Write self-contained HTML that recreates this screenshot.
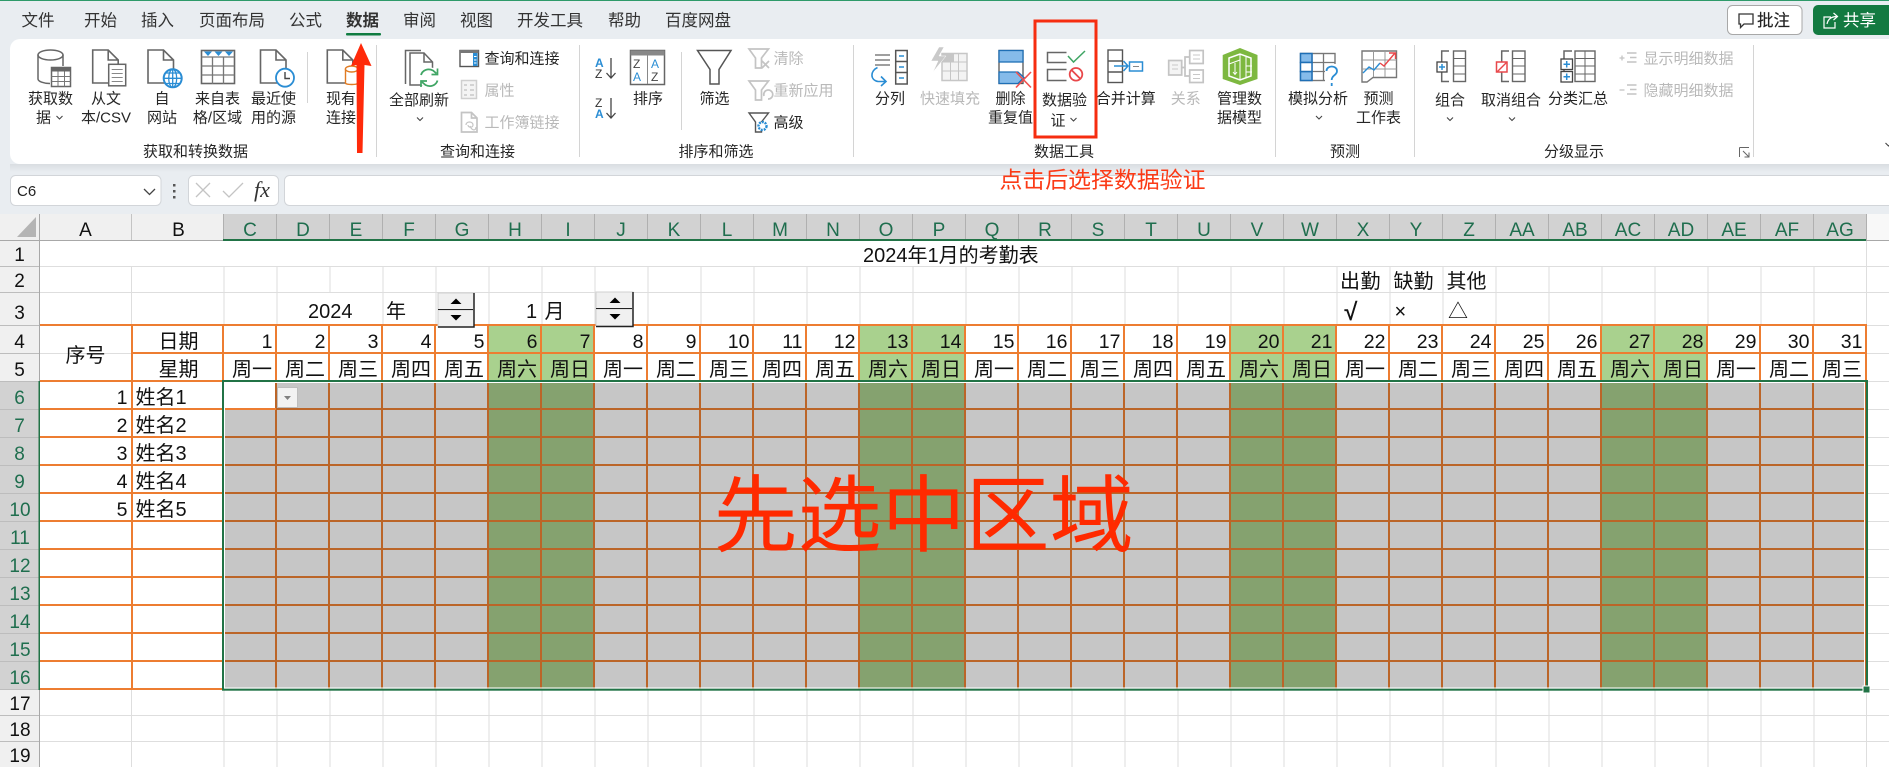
<!DOCTYPE html>
<html lang="zh-CN"><head><meta charset="utf-8"><title>2024年1月的考勤表</title>
<style>
html,body{margin:0;padding:0;width:1889px;height:767px;overflow:hidden;background:#fff}
svg{display:block}
text{font-family:"Liberation Sans","Noto Sans CJK SC",sans-serif;fill:#262626;font-size:15px}
.c{text-anchor:middle}
.g{fill:#b9b9b9}
.tab{font-size:16.5px;fill:#333}
.h{font-size:19px;text-anchor:middle;fill:#111}
.hs{font-size:19px;text-anchor:middle;fill:#1f6e4e}
.rn{font-size:19px;text-anchor:middle;fill:#111}
.rs{font-size:19px;text-anchor:middle;fill:#1f6e4e}
.s{font-size:20px;fill:#111}
.d{font-size:19.5px;text-anchor:end;fill:#111}
.w{font-size:20px;text-anchor:middle;fill:#111}
.i{fill:none;stroke:#666;stroke-width:1.5}
.l{fill:none;stroke:#c4c4c4;stroke-width:1.7}
</style></head><body>
<svg width="1889" height="767" viewBox="0 0 1889 767" xmlns="http://www.w3.org/2000/svg">
<defs>
<linearGradient id="sh" x1="0" y1="0" x2="0" y2="1"><stop offset="0" stop-color="#d9dde1"/><stop offset="1" stop-color="#e9edf1"/></linearGradient>
<path id="doc" d="M0 0H15.5L25.5 10V33H0ZM15.5 0V10H25.5" fill="#fff" stroke="#666" stroke-width="1.6"/>
</defs>
<!-- chrome -->
<rect width="1889" height="214" fill="#e9edf1"/>
<rect width="1889" height="1" fill="#2e9a6a"/>
<rect x="10" y="164" width="1879" height="8" fill="url(#sh)"/>
<rect x="10" y="39" width="1900" height="125" rx="10" fill="#fff"/>
<!-- tabs -->
<text class="tab" x="21.5" y="26">文件</text>
<text class="tab" x="84" y="26">开始</text>
<text class="tab" x="141" y="26">插入</text>
<text class="tab" x="199" y="26">页面布局</text>
<text class="tab" x="289" y="26">公式</text>
<text class="tab" x="346" y="26" style="font-weight:700">数据</text>
<rect x="346" y="33" width="35" height="2.5" rx="1" fill="#107c41"/>
<text class="tab" x="403" y="26">审阅</text>
<text class="tab" x="460" y="26">视图</text>
<text class="tab" x="517" y="26">开发工具</text>
<text class="tab" x="608" y="26">帮助</text>
<text class="tab" x="665" y="26">百度网盘</text>
<!-- comment/share -->
<rect x="1727.5" y="5.5" width="74.5" height="29" rx="5" fill="#fff" stroke="#a8a8a8"/>
<path d="M1739 14H1753V24H1744L1740.5 27.5V24H1739Z" fill="none" stroke="#333" stroke-width="1.3"/>
<text x="1757" y="26" style="font-size:16.5px;fill:#222;stroke:#222;stroke-width:.15">批注</text>
<path d="M1818 5H1889V35H1818A5 5 0 0 1 1813 30V10A5 5 0 0 1 1818 5Z" fill="#137a41"/>
<path d="M1831 17H1824V28H1835V22M1827 24C1828 19 1831 16.5 1837 16.5M1833.5 13L1837.5 16.5L1833.5 20" fill="none" stroke="#fff" stroke-width="1.2"/>
<text x="1843" y="26" style="font-size:16.5px;fill:#fff">共享</text>
<!-- ribbon separators -->
<path d="M307.5 52V103M376.5 45V157M579.5 45V157M681.5 52V130M853.5 45V157M1275.5 45V157M1414.5 45V157M1753.5 45V157" stroke="#d4d4d4" fill="none"/>
<!-- ribbon labels -->
<text class="c" x="50.5" y="103.5">获取数</text><text class="c" x="43.5" y="122.5">据</text>
<path d="M56.5 116l3 3 3-3" class="i" style="stroke:#444;stroke-width:1.1"/>
<text class="c" x="106" y="103.5">从文</text><text class="c" x="106" y="122.5">本/CSV</text>
<text class="c" x="162" y="103.5">自</text><text class="c" x="162" y="122.5">网站</text>
<text class="c" x="217.5" y="103.5">来自表</text><text class="c" x="217.5" y="122.5">格/区域</text>
<text class="c" x="273.5" y="103.5">最近使</text><text class="c" x="273.5" y="122.5">用的源</text>
<text class="c" x="341" y="103.5">现有</text><text class="c" x="341" y="122.5">连接</text>
<text class="c" x="195.5" y="156.5">获取和转换数据</text>
<text class="c" x="419" y="105">全部刷新</text>
<path d="M417 117.5l3 3 3-3" class="i" style="stroke:#444;stroke-width:1.1"/>
<text x="484.5" y="63.5">查询和连接</text><text class="g" x="484.5" y="95.5">属性</text><text class="g" x="484.5" y="127.5">工作簿链接</text>
<text class="c" x="477.5" y="156.5">查询和连接</text>
<text class="c" x="648" y="103.5">排序</text><text class="c" x="714.5" y="103.5">筛选</text>
<text class="g" x="773.5" y="63.5">清除</text><text class="g" x="773.5" y="95.5">重新应用</text><text x="773.5" y="127.5">高级</text>
<text class="c" x="716" y="156.5">排序和筛选</text>
<text class="c" x="890" y="103.5">分列</text><text class="c g" x="950" y="103.5">快速填充</text>
<text class="c" x="1010.5" y="103.5">删除</text><text class="c" x="1010.5" y="122.5">重复值</text>
<text class="c" x="1064.5" y="105">数据验</text><text class="c" x="1058" y="125.5">证</text>
<path d="M1070.5 118l3 3 3-3" class="i" style="stroke:#444;stroke-width:1.1"/>
<text class="c" x="1125.7" y="103.5">合并计算</text><text class="c g" x="1185.7" y="103.5">关系</text>
<text class="c" x="1239.5" y="103.5">管理数</text><text class="c" x="1239.5" y="122.5">据模型</text>
<text class="c" x="1064" y="156.5">数据工具</text>
<text class="c" x="1318" y="103.5">模拟分析</text>
<path d="M1316 116l3 3 3-3" class="i" style="stroke:#444;stroke-width:1.1"/>
<text class="c" x="1378.5" y="103.5">预测</text><text class="c" x="1378.5" y="122.5">工作表</text>
<text class="c" x="1345" y="156.5">预测</text>
<text class="c" x="1450" y="105">组合</text><path d="M1447 117.5l3 3 3-3" class="i" style="stroke:#444;stroke-width:1.1"/>
<text class="c" x="1511" y="105">取消组合</text><path d="M1509 117.5l3 3 3-3" class="i" style="stroke:#444;stroke-width:1.1"/>
<text class="c" x="1578" y="103.5">分类汇总</text>
<text class="g" x="1643.5" y="63.5">显示明细数据</text><text class="g" x="1643.5" y="95.5">隐藏明细数据</text>
<text class="c" x="1574" y="156.5">分级显示</text>
<path d="M1739.5 147.5H1749M1739.5 147.5V157M1743 151L1749 157M1749 152.5V157H1744.5" fill="none" stroke="#666" stroke-width="1"/>
<path d="M1885.5 143l3 3 3-3" class="i" style="stroke:#444;stroke-width:1.1"/>
<!-- icons row 1 -->
<path d="M38 55V79C38 81.5 44 83.5 50 83.5M63 55V66" class="i"/><ellipse cx="50.5" cy="55" rx="12.5" ry="5" class="i"/>
<rect x="51.5" y="67.5" width="19" height="19" fill="#fff" stroke="#666" stroke-width="1.5"/><rect x="51.5" y="67.5" width="19" height="4" fill="#666"/>
<path d="M51.5 76.5H70.5M51.5 81.5H70.5M58 71.5V86.5M64.5 71.5V86.5" stroke="#777" fill="none"/>
<use href="#doc" x="92.7" y="50"/>
<rect x="108.7" y="64.3" width="17" height="21.5" fill="#fff" stroke="#666" stroke-width="1.5"/>
<path d="M111.7 69.5H122.7M111.7 73.5H122.7M111.7 77.5H122.7M111.7 81.5H122.7" stroke="#888"/>
<use href="#doc" x="148" y="50"/>
<circle cx="172.7" cy="78.3" r="9" fill="#fff" stroke="#2a8dd4" stroke-width="2"/>
<path d="M163.7 78.3H181.7M165.5 73H180M165.5 83.5H180M172.7 69.3V87.3" stroke="#2a8dd4" fill="none" stroke-width="1.3"/><ellipse cx="172.7" cy="78.3" rx="4" ry="9" fill="none" stroke="#2a8dd4" stroke-width="1.3"/>
<rect x="201.5" y="50.5" width="33" height="33" fill="#fff" stroke="#666" stroke-width="1.6"/>
<path d="M201.5 57H234.5M201.5 66H234.5M201.5 75H234.5M212.5 57V84M223.5 57V84" stroke="#777" fill="none" stroke-width="1.3"/>
<path d="M204 51.5H212L208 56ZM214.5 51.5H222.5L218.5 56ZM225 51.5H233L229 56Z" fill="#2a8dd4"/>
<use href="#doc" x="260.5" y="50"/>
<circle cx="285" cy="77.7" r="9" fill="#fff" stroke="#2a8dd4" stroke-width="1.8"/><path d="M285 72V78.5H290" fill="none" stroke="#444" stroke-width="1.4"/>
<use href="#doc" x="327.3" y="50"/>
<path d="M345.5 69V83C345.5 85 358 85 358 83V69" fill="#fff" stroke="#e07b22" stroke-width="1.4"/><ellipse cx="351.7" cy="69" rx="6.3" ry="3" fill="#fff" stroke="#e07b22" stroke-width="1.4"/>
<!-- refresh -->
<path d="M405.5 84V50.5H421" class="i"/>
<path d="M410 53H424L432.5 62V85H410Z" fill="#fff" stroke="#666" stroke-width="1.5"/><path d="M424 53V62H432.5" class="i"/>
<circle cx="429.3" cy="77.7" r="10.5" fill="#fff"/>
<path d="M421 75C422.5 70 428 68 433 70.5L436.5 73.5M437.5 80.5C436 85.5 430.5 87.5 425.5 85L422 82" fill="none" stroke="#3fa564" stroke-width="1.8"/>
<path d="M437.5 68.5V74.5H431.5M421 87V81H427" fill="none" stroke="#3fa564" stroke-width="1.7"/>
<!-- query small icons -->
<rect x="460" y="50.5" width="18.5" height="16" fill="#fff" stroke="#555" stroke-width="1.4"/><rect x="460" y="50" width="18.5" height="3" fill="#777"/><rect x="473" y="53" width="4.5" height="13" fill="#2a8dd4"/><path d="M474 56.5H476.5M474 60H476.5M474 63H476.5" stroke="#fff"/>
<rect x="461.5" y="80.5" width="15" height="18" fill="#f4f4f4" stroke="#cfcfcf" stroke-width="1.5"/><path d="M464 85H467M464 90H467M464 95H467M470 85H474M470 90H474M470 95H474" stroke="#c8c8c8" stroke-width="1.5"/>
<path d="M461.5 112.5H471.5L477 118V132H461.5ZM471.5 112.5V118H477" class="l"/><path d="M466 125C466 121 473 121 473 125C473 128 468 128 468 125M470 126C472 131 476 131 476 127" class="l" style="stroke-width:1.2"/>
<!-- sort -->
<text x="595" y="67" style="font-size:12px;font-weight:700;fill:#2a8dd4">A</text><text x="595" y="78" style="font-size:12px;fill:#333">Z</text>
<path d="M611 58V77.5M606.5 73L611 78L615.5 73" fill="none" stroke="#444" stroke-width="1.3"/>
<text x="595" y="107" style="font-size:12px;fill:#333">Z</text><text x="595" y="118" style="font-size:12px;font-weight:700;fill:#2a8dd4">A</text>
<path d="M611 98V117.5M606.5 113L611 118L615.5 113" fill="none" stroke="#444" stroke-width="1.3"/>
<rect x="630.5" y="50.5" width="34" height="34" fill="#fff" stroke="#666" stroke-width="1.5"/><rect x="630.5" y="50.5" width="34" height="5" fill="#888"/><path d="M647.5 55V84" stroke="#888"/>
<text x="633" y="68" style="font-size:12px;fill:#444">Z</text><text x="633" y="81" style="font-size:12px;fill:#2a8dd4">A</text><text x="651" y="68" style="font-size:12px;fill:#2a8dd4">A</text><text x="651" y="81" style="font-size:12px;fill:#444">Z</text>
<!-- filter -->
<path d="M697.5 50.5H731L719 69.5V84H710V69.5Z" fill="#fff" stroke="#555" stroke-width="1.5"/>
<path d="M749 49H768.5L761.5 58V68H755.5V58Z" class="l"/><path d="M762 61L769 68M769 61L762 68" class="l"/>
<path d="M749 81H768.5L761.5 90V100H755.5V90Z" class="l"/><path d="M764 96A4.5 4.5 0 1 1 768 99" class="l"/>
<path d="M749 113H768.5L761.5 122V132H755.5V122Z" fill="#fff" stroke="#555" stroke-width="1.4"/>
<circle cx="762.5" cy="126" r="4" fill="#fff" stroke="#2a8dd4" stroke-width="2.4" stroke-dasharray="2 1"/>
<!-- text to columns -->
<path d="M875 55H890M875 60H890M875 65H890" stroke="#666" stroke-width="1.3"/>
<rect x="895.7" y="50.5" width="11.5" height="33.5" fill="#fff" stroke="#555" stroke-width="1.5"/><path d="M895.7 61.5H907M895.7 72.5H907" stroke="#555" stroke-width="1.5"/>
<path d="M899 56H904M899 67H904M899 78H904" stroke="#2a8dd4" stroke-width="1.5"/>
<path d="M877.5 67.5C870 71 870 80 878 81.5H885M881 76.5L886 81.5L881 86" fill="none" stroke="#2a8dd4" stroke-width="1.6"/>
<!-- flash fill -->
<rect x="942" y="53.5" width="25" height="27" fill="#f3f3f3" stroke="#c6c6c6" stroke-width="1.5"/><rect x="942" y="53.5" width="12" height="9" fill="#c6c6c6"/><path d="M942 62H967M942 71H967M950.5 53V80M958.5 53V80" stroke="#c6c6c6"/>
<path d="M939 47L931 61H938L933 72L946 56H939L944 47Z" fill="#c9c9c9" stroke="#fff" stroke-width=".5"/>
<!-- remove duplicates -->
<rect x="999" y="50.5" width="24" height="33" fill="#fff" stroke="#555" stroke-width="1.3"/>
<rect x="999" y="50.5" width="24" height="11.5" fill="#85bbea" stroke="#1f6fb5" stroke-width="1.3"/>
<path d="M999 72H1018L1024 77.5L1018 83.5H999Z" fill="#85bbea" stroke="#1f6fb5" stroke-width="1.3"/>
<path d="M1016 72L1031 87.5M1031 72L1016 87.5" stroke="#f0514e" stroke-width="1.6"/>
<!-- data validation -->
<path d="M1066.5 52.5H1047.5V62.5H1066.5M1066.5 69.5H1047.5V80.5H1066.5" class="i"/>
<path d="M1068 56L1073.5 62L1085 51" fill="none" stroke="#3fa564" stroke-width="1.5"/>
<circle cx="1076" cy="74.3" r="6.3" fill="#fff" stroke="#e8474a" stroke-width="1.8"/><path d="M1071.5 70L1080.5 79" stroke="#e8474a" stroke-width="1.8"/>
<!-- consolidate -->
<rect x="1108" y="50" width="14.5" height="32.5" fill="#fff" stroke="#555" stroke-width="1.4"/><path d="M1108 61H1122.5M1108 72H1122.5" stroke="#555" stroke-width="1.4"/>
<path d="M1114 66H1128M1123.5 61L1128 66L1123.5 71" fill="none" stroke="#2a8dd4" stroke-width="1.5"/>
<rect x="1129.5" y="62" width="13" height="9" fill="#fff" stroke="#2a8dd4" stroke-width="1.5"/><path d="M1133 66.5H1139" stroke="#888"/>
<!-- relationships -->
<path d="M1181.7 67.5H1185V57H1189.5M1185 67.5V76H1189.5" class="l"/>
<rect x="1168.7" y="60.5" width="13" height="14.5" class="l" style="fill:#f4f4f4"/><rect x="1189.7" y="50.5" width="13.5" height="13" class="l"/><rect x="1189.7" y="70" width="13.5" height="12.5" class="l"/>
<path d="M1172 65H1178M1172 69H1178M1193 55H1200M1193 59H1200M1193 74.5H1200M1193 78.5H1200" stroke="#c8c8c8"/>
<!-- data model -->
<path d="M1240 48L1257.5 55V79L1240 85L1222.7 79V55Z" fill="#7db840"/>
<path d="M1229 58L1240 54L1251 58V76L1240 80L1229 76Z" fill="none" stroke="#fff" stroke-width="1.5"/><path d="M1240 54V80M1246 57V78M1229 64L1240 60M1246 66H1252M1246 72H1252" stroke="#fff" fill="none"/>
<path d="M1235 63V74M1233 72L1235 74.5L1237 72" stroke="#fff" fill="none"/>
<!-- what-if -->
<rect x="1300.5" y="53.5" width="34.5" height="27" fill="#fff" stroke="#777" stroke-width="1.4"/>
<path d="M1312 53.5V80.5M1323.5 53.5V80.5M1300.5 62.5H1335M1300.5 71.5H1335" stroke="#777" stroke-width="1.3"/>
<rect x="1300.5" y="53.5" width="11.5" height="9" fill="#85bbea" stroke="#1f6fb5" stroke-width="1.5"/><rect x="1300.5" y="71.5" width="11.5" height="9" fill="#85bbea" stroke="#1f6fb5" stroke-width="1.5"/><path d="M1300.5 62.5H1312V71.5H1300.5Z" fill="#fff" stroke="#1f6fb5" stroke-width="1.5"/>
<rect x="1325" y="64" width="13" height="22" fill="#fff"/><path d="M1326.5 71C1326.5 65 1337 65 1337 71C1337 75.5 1331.7 75 1331.7 80M1331.7 83V86" fill="none" stroke="#2a8dd4" stroke-width="1.8"/>
<!-- forecast -->
<path d="M1362 51H1396.5V77.5H1373L1367 82H1362Z" fill="#fff" stroke="#777" stroke-width="1.4"/>
<path d="M1362 60H1396.5M1362 69H1396.5M1373.5 51V77M1385 51V77" stroke="#999"/>
<path d="M1363 73L1369 67L1374 70L1380 63" fill="none" stroke="#2a8dd4" stroke-width="1.4"/><path d="M1380 63L1384 66L1395 53M1389 53H1395.5V59" fill="none" stroke="#e8474a" stroke-width="1.4"/>
<!-- outline -->
<path d="M1449 51H1441.7V61.5M1441.7 72V81.5H1449" class="i"/>
<rect x="1437" y="62" width="10" height="10" fill="#fff" stroke="#444" stroke-width="1.3"/><path d="M1442 64V70M1439 67H1445" stroke="#2a8dd4" stroke-width="1.5"/>
<rect x="1453.5" y="51" width="12" height="30.5" fill="#fff" stroke="#666" stroke-width="1.4"/><path d="M1453.5 58.5H1465.5M1453.5 66H1465.5M1453.5 74H1465.5" stroke="#666"/>
<path d="M1509 51H1501.7V61.5M1501.7 72V81.5H1509" class="i"/>
<rect x="1496.5" y="62" width="10.5" height="10" fill="#fff" stroke="#e8474a" stroke-width="1.5"/><path d="M1497 72L1507 62" stroke="#e8474a" stroke-width="1.4"/>
<rect x="1512.5" y="51" width="12.5" height="30.5" fill="#fff" stroke="#666" stroke-width="1.4"/><path d="M1512.5 58.5H1525M1512.5 66H1525M1512.5 74H1525" stroke="#666"/>
<path d="M1572 51H1564V59M1564 69.5V71.5" class="i"/>
<rect x="1561" y="59" width="11.5" height="10.5" fill="#fff" stroke="#444" stroke-width="1.3"/><rect x="1561" y="71.5" width="11.5" height="10.5" fill="#fff" stroke="#444" stroke-width="1.3"/>
<path d="M1566.7 61V67.5M1563.5 64.2H1570M1566.7 73.5V80M1563.5 76.7H1570" stroke="#2a8dd4" stroke-width="1.5"/>
<rect x="1575" y="51" width="20" height="30.5" fill="#fff" stroke="#666" stroke-width="1.4"/><path d="M1585 51V81.5M1575 58.5H1595M1575 66H1595M1575 74H1595" stroke="#666"/>
<path d="M1619.5 58H1624.5M1622 55.5V60.5" stroke="#c4c4c4" stroke-width="1.3"/><path d="M1627 53H1636.5M1630 57.5H1636.5M1627 62H1636.5" stroke="#c4c4c4" stroke-width="1.4"/>
<path d="M1619.5 90H1624.5" stroke="#c4c4c4" stroke-width="1.3"/><path d="M1627 85H1636.5M1630 89.5H1636.5M1627 94H1636.5" stroke="#c4c4c4" stroke-width="1.4"/>
<!-- formula bar -->
<rect x="10.5" y="175.5" width="150.5" height="30" rx="5" fill="#fff" stroke="#d2d5d9"/>
<text x="17" y="196" style="font-size:15px;fill:#222">C6</text>
<path d="M144 189l5.5 5.5 5.5-5.5" fill="none" stroke="#444" stroke-width="1.3"/>
<rect x="173" y="184" width="2.5" height="2.5" fill="#555"/><rect x="173" y="190" width="2.5" height="2.5" fill="#555"/><rect x="173" y="196" width="2.5" height="2.5" fill="#555"/>
<rect x="188.5" y="175.5" width="90" height="30" rx="5" fill="#fff" stroke="#d2d5d9"/>
<path d="M196 183L210 197M210 183L196 197" stroke="#c4c4c4" stroke-width="1.3"/><path d="M223 191L229 197L243 183" fill="none" stroke="#c4c4c4" stroke-width="1.3"/>
<text x="254" y="197" style="font-family:'Liberation Serif',serif;font-style:italic;font-size:22px;fill:#333">fx</text>
<rect x="284.5" y="175.5" width="1620" height="30" rx="5" fill="#fff" stroke="#d2d5d9"/>
<!-- sheet bg -->
<rect y="214" width="1889" height="553" fill="#fff"/>
<!-- column header -->
<rect y="214" width="223" height="26" fill="#f0f0f0"/><rect x="223" y="214" width="1643" height="26" fill="#d2d2d2"/><rect x="1866" y="214" width="23" height="26" fill="#f8f8f8"/>
<rect x="0" y="240" width="40" height="527" fill="#f0f0f0"/><rect x="0" y="381" width="39" height="308" fill="#d2d2d2"/>
<path d="M36 217V237H17Z" fill="#b4b4b4"/>
<path d="M39.5 214V381M39.5 690V767" stroke="#a8a8a8"/>
<path d="M131.5 214V240" stroke="#c4c4c4"/>
<line x1="223" x2="1867" y1="227" y2="227" stroke="#b0b0b0" stroke-width="26" stroke-dasharray="1 52"/>
<path d="M0 240.5H223M1866 240.5H1889" stroke="#a8a8a8"/><rect x="223" y="239" width="1643" height="2" fill="#217346"/>
<path d="M0 266.5H39M0 292.5H39M0 325.5H39M0 353.5H39M0 381.5H39M0 409.5H39M0 437.5H39M0 465.5H39M0 493.5H39M0 521.5H39M0 549.5H39M0 577.5H39M0 605.5H39M0 633.5H39M0 661.5H39M0 689.5H39M0 715.5H39M0 741.5H39" stroke="#bdbdbd"/>
<text class="h" x="85.5" y="236">A</text><text class="h" x="178.5" y="236">B</text>
<text class="hs" x="250" y="236">C</text><text class="hs" x="303" y="236">D</text><text class="hs" x="356" y="236">E</text><text class="hs" x="409" y="236">F</text><text class="hs" x="462" y="236">G</text><text class="hs" x="515" y="236">H</text><text class="hs" x="568" y="236">I</text><text class="hs" x="621" y="236">J</text><text class="hs" x="674" y="236">K</text><text class="hs" x="727" y="236">L</text><text class="hs" x="780" y="236">M</text><text class="hs" x="833" y="236">N</text><text class="hs" x="886" y="236">O</text><text class="hs" x="939" y="236">P</text><text class="hs" x="992" y="236">Q</text><text class="hs" x="1045" y="236">R</text><text class="hs" x="1098" y="236">S</text><text class="hs" x="1151" y="236">T</text><text class="hs" x="1204" y="236">U</text><text class="hs" x="1257" y="236">V</text><text class="hs" x="1310" y="236">W</text><text class="hs" x="1363" y="236">X</text><text class="hs" x="1416" y="236">Y</text><text class="hs" x="1469" y="236">Z</text><text class="hs" x="1522" y="236">AA</text><text class="hs" x="1575" y="236">AB</text><text class="hs" x="1628" y="236">AC</text><text class="hs" x="1681" y="236">AD</text><text class="hs" x="1734" y="236">AE</text><text class="hs" x="1787" y="236">AF</text><text class="hs" x="1840" y="236">AG</text>
<!-- row numbers -->
<text class="rn" x="19.5" y="261">1</text><text class="rn" x="19.5" y="287">2</text><text class="rn" x="19.5" y="319">3</text><text class="rn" x="19.5" y="348">4</text><text class="rn" x="19.5" y="376">5</text>
<text class="rs" x="19.5" y="404">6</text><text class="rs" x="19.5" y="432">7</text><text class="rs" x="19.5" y="460">8</text><text class="rs" x="19.5" y="488">9</text><text class="rs" x="20" y="516">10</text><text class="rs" x="20" y="544">11</text><text class="rs" x="20" y="572">12</text><text class="rs" x="20" y="600">13</text><text class="rs" x="20" y="628">14</text><text class="rs" x="20" y="656">15</text><text class="rs" x="20" y="684">16</text>
<text class="rn" x="20" y="710">17</text><text class="rn" x="20" y="736">18</text><text class="rn" x="20" y="762">19</text>
<!-- light grid -->
<path d="M40 266.5H1889M40 292.5H1889M40 325.5H1889M40 353.5H1889M40 381.5H1889M40 409.5H1889M40 437.5H1889M40 465.5H1889M40 493.5H1889M40 521.5H1889M40 549.5H1889M40 577.5H1889M40 605.5H1889M40 633.5H1889M40 661.5H1889M40 689.5H1889M40 715.5H1889M40 741.5H1889M1866.5 241V767M131.5 266V325M131.5 690V767" stroke="#dedede"/>
<line x1="223" x2="1867" y1="295.5" y2="295.5" stroke="#dedede" stroke-width="59" stroke-dasharray="1 52" stroke-dashoffset="-.5"/>
<line x1="223" x2="1867" y1="728.5" y2="728.5" stroke="#dedede" stroke-width="77" stroke-dasharray="1 52" stroke-dashoffset="-.5"/>
<rect x="329" y="293" width="2" height="32" fill="#fff"/>
<!-- fills -->
<rect x="223" y="381" width="1643" height="308" fill="#c6c6c6"/>
<rect x="488" y="325" width="106" height="56" fill="#a9d18e"/><rect x="859" y="325" width="106" height="56" fill="#a9d18e"/><rect x="1230" y="325" width="106" height="56" fill="#a9d18e"/><rect x="1601" y="325" width="106" height="56" fill="#a9d18e"/>
<rect x="488" y="381" width="106" height="308" fill="#85a26f"/><rect x="859" y="381" width="106" height="308" fill="#85a26f"/><rect x="1230" y="381" width="106" height="308" fill="#85a26f"/><rect x="1601" y="381" width="106" height="308" fill="#85a26f"/>
<rect x="40" y="381" width="183" height="308" fill="#fff"/>
<rect x="223" y="381" width="53" height="28" fill="#fff"/>
<!-- selected inner borders -->
<path d="M223 409H1866M223 437H1866M223 465H1866M223 493H1866M223 521H1866M223 549H1866M223 577H1866M223 605H1866M223 633H1866M223 661H1866" stroke="#bb6528" stroke-width="2"/>
<line x1="275" x2="1866" y1="535" y2="535" stroke="#bb6528" stroke-width="308" stroke-dasharray="2 51"/>
<!-- orange borders -->
<path d="M40 325H1867M131 353H1867M40 381H223M40 409H276M40 437H223M40 465H223M40 493H223M40 521H223M40 549H223M40 577H223M40 605H223M40 633H223M40 661H223M40 689H223" stroke="#ed7d31" stroke-width="2"/>
<path d="M132 325V689" stroke="#ed7d31" stroke-width="2"/>
<line x1="222" x2="1868" y1="353" y2="353" stroke="#ed7d31" stroke-width="56" stroke-dasharray="2 51"/>
<!-- selection -->
<path d="M224.5 382.5H1864.5V688H224.5Z" fill="none" stroke="#fff" stroke-width="1"/>
<rect x="223" y="381" width="1644" height="308.7" fill="none" stroke="#217346" stroke-width="2"/>
<rect x="38.5" y="381" width="1.5" height="309" fill="#217346"/>
<rect x="1862.5" y="685.5" width="8" height="8" fill="#fff"/><rect x="1863.5" y="686.5" width="6" height="6" fill="#217346"/>
<!-- dropdown -->
<rect x="277.5" y="387.5" width="20" height="20" fill="#f2f2f2" stroke="#bdbdbd"/><path d="M284 396H291L287.5 400Z" fill="#808080"/>
<!-- cell text -->
<text class="s" x="863" y="262">2024年1月的考勤表</text>
<text class="s" x="1340" y="288" style="letter-spacing:.5px">出勤</text><text class="s" x="1393.5" y="288">缺勤</text><text class="s" x="1446.5" y="288">其他</text>
<text class="s" x="1344" y="320" style="font-size:24px;fill:#111;stroke:#111;stroke-width:.5">√</text><text class="s" x="1394.5" y="318">×</text><text class="s" x="1448" y="318">△</text>
<text class="s" x="308" y="318">2024</text><text class="s" x="386" y="318">年</text><text class="s" x="526" y="318">1</text><text class="s" x="544.5" y="318">月</text>
<!-- spinners -->
<rect x="438" y="293" width="36" height="17" fill="#f0f0f0" stroke="#d0d0d0"/><rect x="438" y="310" width="36" height="17" fill="#f0f0f0" stroke="#d0d0d0"/><path d="M474 293V327H438" fill="none" stroke="#222" stroke-width="1.5"/><path d="M438 309.5H473" stroke="#222"/>
<path d="M450.5 304H461.5L456 298.5Z M450.5 315H461.5L456 320.5Z" fill="#000"/>
<rect x="596" y="292" width="37" height="17" fill="#f0f0f0" stroke="#d0d0d0"/><rect x="596" y="309" width="37" height="17" fill="#f0f0f0" stroke="#d0d0d0"/><path d="M633 292V326.5H596" fill="none" stroke="#222" stroke-width="1.5"/><path d="M596 308.5H632" stroke="#222"/>
<path d="M609.5 303H620.5L615 297.5Z M609.5 314H620.5L615 319.5Z" fill="#000"/>
<text class="w" x="85.5" y="362">序号</text>
<text class="w" x="178.5" y="348">日期</text><text class="w" x="178.5" y="376">星期</text>
<text class="d" x="272.5" y="348">1</text><text class="d" x="325.5" y="348">2</text><text class="d" x="378.5" y="348">3</text><text class="d" x="431.5" y="348">4</text><text class="d" x="484.5" y="348">5</text><text class="d" x="537.5" y="348">6</text><text class="d" x="590.5" y="348">7</text><text class="d" x="643.5" y="348">8</text><text class="d" x="696.5" y="348">9</text><text class="d" x="749.5" y="348">10</text><text class="d" x="802.5" y="348">11</text><text class="d" x="855.5" y="348">12</text><text class="d" x="908.5" y="348">13</text><text class="d" x="961.5" y="348">14</text><text class="d" x="1014.5" y="348">15</text><text class="d" x="1067.5" y="348">16</text><text class="d" x="1120.5" y="348">17</text><text class="d" x="1173.5" y="348">18</text><text class="d" x="1226.5" y="348">19</text><text class="d" x="1279.5" y="348">20</text><text class="d" x="1332.5" y="348">21</text><text class="d" x="1385.5" y="348">22</text><text class="d" x="1438.5" y="348">23</text><text class="d" x="1491.5" y="348">24</text><text class="d" x="1544.5" y="348">25</text><text class="d" x="1597.5" y="348">26</text><text class="d" x="1650.5" y="348">27</text><text class="d" x="1703.5" y="348">28</text><text class="d" x="1756.5" y="348">29</text><text class="d" x="1809.5" y="348">30</text><text class="d" x="1862.5" y="348">31</text>
<text class="w" x="252" y="376">周一</text><text class="w" x="305" y="376">周二</text><text class="w" x="358" y="376">周三</text><text class="w" x="411" y="376">周四</text><text class="w" x="464" y="376">周五</text><text class="w" x="517" y="376">周六</text><text class="w" x="570" y="376">周日</text><text class="w" x="623" y="376">周一</text><text class="w" x="676" y="376">周二</text><text class="w" x="729" y="376">周三</text><text class="w" x="782" y="376">周四</text><text class="w" x="835" y="376">周五</text><text class="w" x="888" y="376">周六</text><text class="w" x="941" y="376">周日</text><text class="w" x="994" y="376">周一</text><text class="w" x="1047" y="376">周二</text><text class="w" x="1100" y="376">周三</text><text class="w" x="1153" y="376">周四</text><text class="w" x="1206" y="376">周五</text><text class="w" x="1259" y="376">周六</text><text class="w" x="1312" y="376">周日</text><text class="w" x="1365" y="376">周一</text><text class="w" x="1418" y="376">周二</text><text class="w" x="1471" y="376">周三</text><text class="w" x="1524" y="376">周四</text><text class="w" x="1577" y="376">周五</text><text class="w" x="1630" y="376">周六</text><text class="w" x="1683" y="376">周日</text><text class="w" x="1736" y="376">周一</text><text class="w" x="1789" y="376">周二</text><text class="w" x="1842" y="376">周三</text>
<text class="d" x="127.5" y="404">1</text><text class="s" x="135.5" y="404">姓名1</text>
<text class="d" x="127.5" y="432">2</text><text class="s" x="135.5" y="432">姓名2</text>
<text class="d" x="127.5" y="460">3</text><text class="s" x="135.5" y="460">姓名3</text>
<text class="d" x="127.5" y="488">4</text><text class="s" x="135.5" y="488">姓名4</text>
<text class="d" x="127.5" y="516">5</text><text class="s" x="135.5" y="516">姓名5</text>
<!-- annotations -->
<text x="713.6" y="545" style="font-size:84px;fill:#ff2a00">先选中区域</text>
<rect x="1035" y="21" width="61" height="116" fill="none" stroke="#f62d10" stroke-width="3"/>
<text x="999.5" y="188" style="font-size:22.9px;fill:#fb3a16">点击后选择数据验证</text>
<path d="M361 43L371.5 66L364.5 65L362.5 153H357L356.5 65L351 66Z" fill="#ff2a0a"/>
</svg>
</body></html>
